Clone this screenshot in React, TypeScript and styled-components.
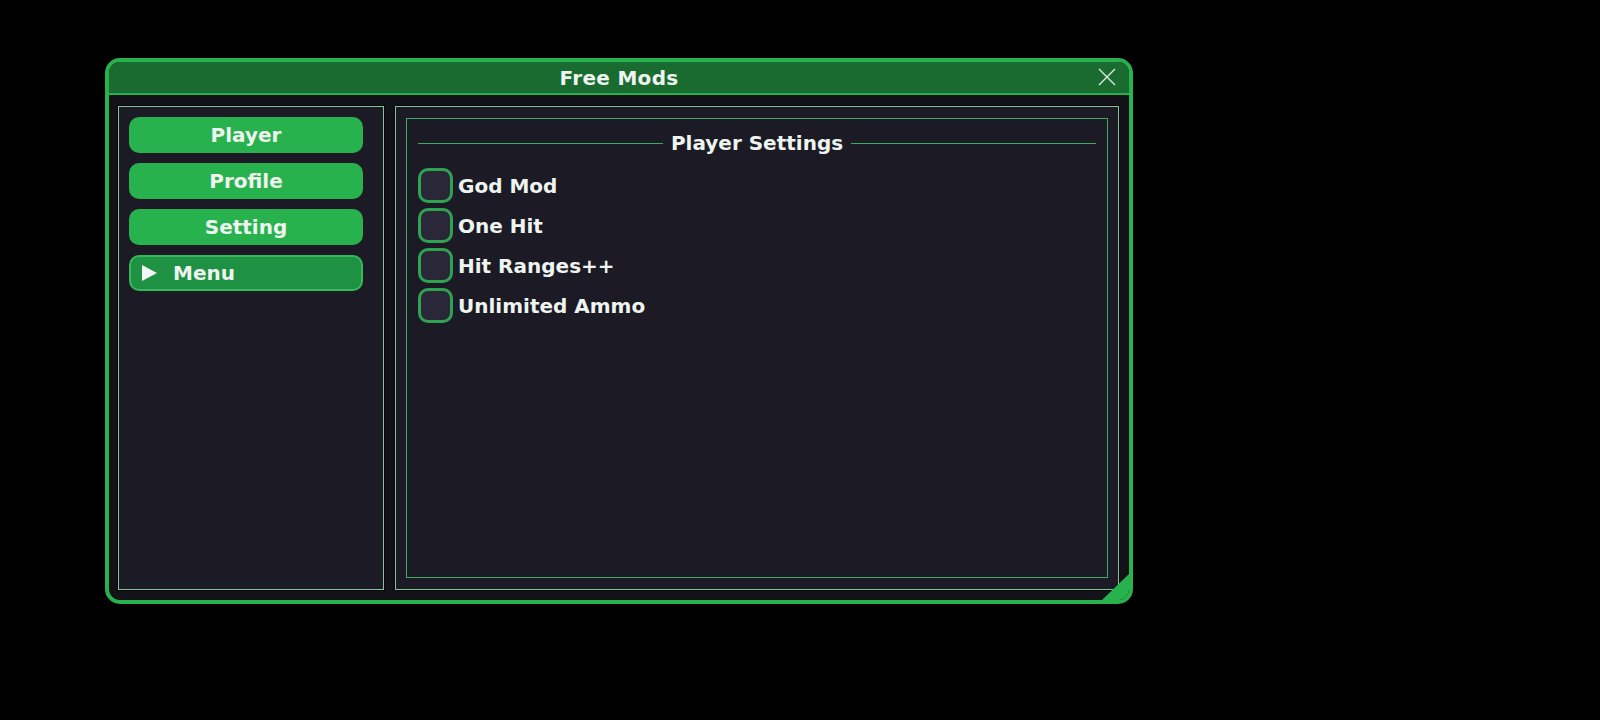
import React from 'react';
import styled, { createGlobalStyle } from 'styled-components';

const GlobalStyle = createGlobalStyle`
    html, body {
        margin: 0;
        padding: 0;
        background: #000;
    }
    body {
        font-family: "DejaVu Sans", "Liberation Sans", sans-serif;
        color: #eef4ef;
    }
`;

const colors = {
    green: '#28b24e',
    greenDark: '#1a6b30',
    greenMuted: '#2ea352',
    line: '#3ca862',
    panelLine: '#86c39a',
    frame: '#131219',
    panel: '#1b1a25',
    check: '#2a2838',
    text: '#eef4ef',
};

const Page = styled.div`
    padding: 58px 0 0 105px;
    min-height: 720px;
    box-sizing: border-box;
`;

const Window = styled.div`
    position: relative;
    width: 1028px;
    height: 546px;
    box-sizing: border-box;
    border: 4px solid ${colors.green};
    border-radius: 15px;
    background: ${colors.frame};
    display: flex;
    flex-direction: column;
    overflow: hidden;
`;

const TitleBar = styled.div`
    height: 31px;
    flex-shrink: 0;
    background: ${colors.greenDark};
    border-bottom: 2px solid ${colors.green};
    display: flex;
    align-items: center;
    justify-content: center;
    position: relative;
`;

const Title = styled.span`
    font-size: 20px;
    font-weight: bold;
    color: ${colors.text};
    letter-spacing: 0.3px;
`;

const Close = styled.button`
    position: absolute;
    right: 12px;
    top: 5px;
    width: 20px;
    height: 20px;
    padding: 0;
    border: none;
    background: none;
    display: flex;
    align-items: center;
    justify-content: center;
    cursor: pointer;
`;

const Body = styled.div`
    flex: 1;
    display: flex;
    gap: 11px;
    padding: 11px 10px 10px 9px;
    min-height: 0;
`;

const Panel = styled.div<{ $width?: number }>`
    ${(p) => (p.$width ? `width: ${p.$width}px;` : 'flex: 1;')}
    flex-shrink: 0;
    box-sizing: border-box;
    border: 1px solid ${colors.panelLine};
    box-shadow: 0 0 0 1px #08080b;
    background: ${colors.panel};
`;

const SideList = styled.div`
    display: flex;
    flex-direction: column;
    gap: 10px;
    padding: 10px 20px 10px 10px;
`;

const TabButton = styled.button<{ $active?: boolean }>`
    height: 36px;
    box-sizing: border-box;
    border-radius: 10px;
    border: ${(p) => (p.$active ? `2px solid #36b95a` : 'none')};
    background: ${(p) => (p.$active ? '#1f9142' : colors.green)};
    color: ${colors.text};
    font-family: inherit;
    font-size: 20px;
    font-weight: bold;
    display: flex;
    align-items: center;
    justify-content: ${(p) => (p.$active ? 'flex-start' : 'center')};
    gap: 16px;
    padding: ${(p) => (p.$active ? '0 0 0 11px' : '0')};
    cursor: pointer;
`;

const Content = styled.div`
    padding: 11px 10px;
    height: 100%;
    box-sizing: border-box;
`;

const Group = styled.div`
    height: 100%;
    box-sizing: border-box;
    border: 1px solid ${colors.line};
    padding: 12px 11px;
    display: flex;
    flex-direction: column;
`;

const Header = styled.div`
    display: flex;
    align-items: center;
    gap: 8px;
    height: 24px;
    margin-bottom: 13px;
`;

const Rule = styled.div`
    flex: 1;
    height: 1px;
    background: ${colors.line};
`;

const HeaderText = styled.span`
    font-size: 20px;
    font-weight: bold;
    color: ${colors.text};
    white-space: nowrap;
`;

const Options = styled.div`
    display: flex;
    flex-direction: column;
    gap: 5px;
`;

const Option = styled.label`
    display: flex;
    align-items: center;
    gap: 5px;
    cursor: pointer;
`;

const Box = styled.span`
    width: 35px;
    height: 35px;
    box-sizing: border-box;
    border: 3px solid ${colors.greenMuted};
    border-radius: 10px;
    background: ${colors.check};
`;

const OptionText = styled.span`
    font-size: 20px;
    font-weight: bold;
    color: ${colors.text};
`;

const Grip = styled.div`
    position: absolute;
    right: 0;
    bottom: 0;
    width: 27px;
    height: 26px;
    background: ${colors.green};
    clip-path: polygon(100% 0, 100% 100%, 0 100%);
`;

const tabs = ['Player', 'Profile', 'Setting'];
const options = ['God Mod', 'One Hit', 'Hit Ranges++', 'Unlimited Ammo'];

export default function App(): JSX.Element {
    return (
        <Page>
            <GlobalStyle />
            <Window>
                <TitleBar>
                    <Title>Free Mods</Title>
                    <Close aria-label="Close">
                        <svg width="18" height="18" viewBox="0 0 18 18">
                            <path d="M1 1 L17 17 M17 1 L1 17" stroke="#d9ecdd" strokeWidth="1.4" />
                        </svg>
                    </Close>
                </TitleBar>
                <Body>
                    <Panel $width={266}>
                        <SideList>
                            {tabs.map((t) => (
                                <TabButton key={t}>{t}</TabButton>
                            ))}
                            <TabButton $active>
                                <svg width="15" height="16" viewBox="0 0 15 16">
                                    <path d="M0 0 L15 8 L0 16 Z" fill="#f2f7f3" />
                                </svg>
                                Menu
                            </TabButton>
                        </SideList>
                    </Panel>
                    <Panel>
                        <Content>
                            <Group>
                                <Header>
                                    <Rule />
                                    <HeaderText>Player Settings</HeaderText>
                                    <Rule />
                                </Header>
                                <Options>
                                    {options.map((o) => (
                                        <Option key={o}>
                                            <Box />
                                            <OptionText>{o}</OptionText>
                                        </Option>
                                    ))}
                                </Options>
                            </Group>
                        </Content>
                    </Panel>
                </Body>
                <Grip />
            </Window>
        </Page>
    );
}
